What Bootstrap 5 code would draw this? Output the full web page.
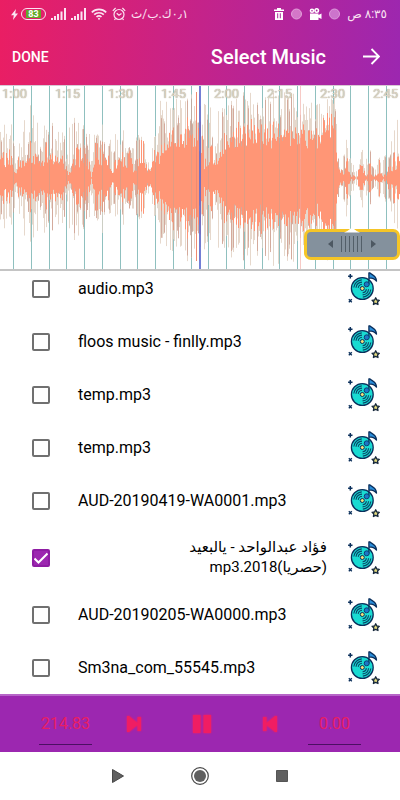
<!DOCTYPE html>
<html lang="en">
<head>
<meta charset="utf-8">
<meta name="viewport" content="width=device-width, initial-scale=1">
<title>Select Music</title>
<link href="https://cdn.jsdelivr.net/npm/bootstrap@5.3.0/dist/css/bootstrap.min.css" rel="stylesheet">
<style>
  body { font-family: Roboto, "DejaVu Sans", sans-serif; color: #000; background: #fff; }
  svg { display: block; flex: none; }
  button { color: inherit; }
  .app-header { background: linear-gradient(95deg, #ea1e63 0%, #c4238a 50%, #9c27b0 100%); color: #fff; }
  .status-line { height: 28px; padding: 0 13px 0 11px; color: #fbe3f2; font: 12px/16px Roboto, "DejaVu Sans", sans-serif; }
  .status-left { gap: 5px; }
  .status-right { gap: 7px; }
  .battery-group { gap: 3px; }
  .battery { width: 25px; height: 12px; border: 1px solid #fbe3f2; border-radius: 6px; padding: 1px 4px; }
  .battery-level { background: #63a82a; color: #fff; font-size: 9px; line-height: 8px; font-weight: 700; }
  .title-line { height: 57px; padding: 0 20px 0 12px; }
  .btn-done { font-size: 14px; font-weight: 500; line-height: 20px; }
  .screen-title { font-size: 20px; font-weight: 500; line-height: 28px; margin-right: 37px; }
  .wave-panel { height: 186px; border-top: 1px solid #d8c8d4; border-bottom: 2px solid #c4c4c4; }
  .wave-panel .wave { width: 100%; height: 100%; }
  .time-scale { color: #ddd5c6; font-size: 13px; line-height: 16px; padding-left: 2px; text-shadow: 0 0 1px #8f8672; }
  .time-scale span { flex: 0 0 53px; }
  .zoom-handle { right: 0; bottom: 9px; width: 96px; height: 31px; background: #84919d; border: 3px solid #f5c527; border-radius: 7px; }
  .zoom-handle svg { overflow: visible; }
  .track-list { min-height: 0; }
  .track { min-height: 53px; padding: 6px 20px 6px 32px; font-size: 16px; line-height: 20px; }
  .track .form-check-input { width: 18px; height: 18px; border: 2px solid #707070; border-radius: 2px; margin: 0 28px 0 0; flex: none; }
  .track .form-check-input:checked { background-color: #9c27b0; border-color: #8e1ca3; background-size: 16px 16px;
    background-image: url("data:image/svg+xml,%3csvg xmlns='http://www.w3.org/2000/svg' viewBox='0 0 16 16'%3e%3cpath d='M1.500 8.500l4 4L14.500 3.500' fill='none' stroke='%23fff' stroke-width='2'/%3e%3c/svg%3e"); }
  .track-name { margin-right: 21px; }
  .track-name[dir="rtl"] { font-size: 15px; padding: 4px 0 5px; max-width: 150px; margin-left: auto; }
  .player { height: 58px; background: #9c27b0; border-top: 2px solid #b765c8; color: #f01d63; }
  .time-field { width: 53px; height: 42px; background: transparent; border: 0; border-bottom: 1px solid #4c0f63; border-radius: 0; color: #e91e63; font: 16px/20px Roboto, sans-serif; text-align: center; padding: 0; }
  .time-field.total { margin-right: 8px; }
  .time-field.current { margin-left: 4px; }
  .player button { width: 68px; }
  .player svg { filter: drop-shadow(0 0 1px #f01d63); }
  .system-nav { height: 48px; }
  .system-nav button { width: 82px; }
</style>
<script src="https://cdn.jsdelivr.net/npm/bootstrap@5.3.0/dist/js/bootstrap.bundle.min.js"></script>
</head>
<body>
<svg width="0" height="0" class="position-absolute" aria-hidden="true">
  <symbol id="disc" viewBox="0 0 32 34">
    <circle cx="14.300" cy="16.500" r="10.900" fill="#19dbd2" stroke="#0b2f5b" stroke-width="1.300"/>
    <g fill="none" stroke="#0b4668" stroke-width="1.100">
      <path d="M5.800 15.500a8.600 8.600 0 0 1 8-7.600M8 15.700a6.400 6.400 0 0 1 6-5.600M10.200 15.900a4.200 4.200 0 0 1 3.800-3.600"/>
      <path d="M22.800 17.500a8.600 8.600 0 0 1-8 7.600M20.600 17.300a6.400 6.400 0 0 1-6 5.600M18.400 17.100a4.200 4.200 0 0 1-3.800 3.600"/>
    </g>
    <circle cx="14.300" cy="16.500" r="2" fill="#f3e27a" stroke="#0b2f5b"/>
    <path d="M20.900 12.500V.8l1 0c1 2 6.200 1.800 6.600 8.200-2-2.600-4-3.200-7.600-3.200" fill="#2a8fdc" stroke="#0b2f5b" stroke-width="1.300" stroke-linejoin="round"/>
    <circle cx="18.700" cy="12.300" r="2.500" fill="#1d78c6" stroke="#0b3f75"/>
    <path d="M2.300 2v4.400M.1 4.200h4.400" stroke="#0b2f5b" stroke-width="1.500"/>
    <path d="M.8 27.200l3 3M3.800 27.200l-3 3" stroke="#0b2f5b" stroke-width="1.300"/>
    <path d="M27.700 25.800l1.100 2.200 2.500.3-1.800 1.700.5 2.500-2.300-1.200-2.300 1.200.5-2.500-1.800-1.700 2.500-.3z" fill="#e6dc80" stroke="#14263a" stroke-width="1.300" stroke-linejoin="round"/>
  </symbol>
  <symbol id="signal" viewBox="0 0 15 12">
    <path d="M0 12v-2h2v2zM3 12V8h2v4zM6 12V6h2v6zM9.500 12V3.500h2V12zM13 12V0h2v12z" fill="currentColor"/>
  </symbol>
</svg>

<div class="vh-100 d-flex flex-column overflow-hidden">
  <header class="app-header flex-shrink-0">
    <div class="status-line d-flex justify-content-between align-items-center">
      <div class="status-left d-flex align-items-center">
        <div class="battery-group d-flex align-items-center">
          <svg width="7" height="11" viewBox="0 0 7 11"><path d="M5 0L0 6.300h2.800L2 11l5-6.600H4.200z" fill="currentColor"/></svg>
          <div class="battery"><div class="battery-level text-center">83</div></div>
        </div>
        <svg width="15" height="12"><use href="#signal"/></svg>
        <svg width="15" height="12"><use href="#signal"/></svg>
        <svg width="16" height="12" viewBox="0 0 16 12" fill="none" stroke="currentColor" stroke-width="1.700"><path d="M.8 4.300a10.300 10.300 0 0 1 14.400 0M3.200 6.700a6.900 6.900 0 0 1 9.600 0M5.500 9a3.600 3.600 0 0 1 5 0"/><circle cx="8" cy="10.700" r="1" fill="currentColor" stroke="none"/></svg>
        <svg width="14" height="14" viewBox="0 0 14 14" fill="none" stroke="currentColor" stroke-width="1.200"><circle cx="7" cy="7.500" r="5"/><path d="M4.700 6.200L7 8.200l2.500-1.700M.8 3.800L3.600 1M13.200 3.800L10.400 1M3.500 11.500l-1 1.500M10.500 11.500l1 1.500"/></svg>
        <span dir="rtl">٠٫١ك.ب/ث</span>
      </div>
      <div class="status-right d-flex align-items-center">
        <svg width="10" height="12" viewBox="0 0 10 12"><path d="M0 1.500h3V0h4v1.500h3V3H0zM1 4h8v8H1z" fill="#fff"/><path d="M3.700 5.300v5M6.300 5.300v5" stroke="#ac2799"/></svg>
        <svg width="11" height="12" viewBox="0 0 11 12"><circle cx="5.500" cy="6" r="5" fill="#d477c8" stroke="#e2a0da"/></svg>
        <svg width="13" height="12" viewBox="0 0 13 12"><g fill="#fff"><circle cx="3" cy="2.700" r="2.300"/><circle cx="7.700" cy="2.500" r="2.500"/><path d="M1 5.500h8.500V7L12.500 5.500v5.500l-3-1.500V12H1z"/></g><circle cx="3" cy="2.700" r=".8" fill="#a9269d"/><circle cx="7.700" cy="2.500" r=".9" fill="#a9269d"/></svg>
        <svg width="11" height="12" viewBox="0 0 11 12"><circle cx="5.500" cy="6" r="5" fill="#cc74cc" stroke="#dd9cdc"/></svg>
        <span dir="rtl">٨:٣٥ ص</span>
      </div>
    </div>
    <div class="title-line d-flex align-items-center">
      <button type="button" class="btn-done border-0 bg-transparent p-0">DONE</button>
      <h1 class="screen-title mb-0 ms-auto">Select Music</h1>
      <button type="button" class="border-0 bg-transparent p-0" aria-label="Back">
        <svg width="17" height="17" viewBox="0 0 17 17" fill="none" stroke="#fff" stroke-width="1.900"><path d="M0 8.500h15.500M8.500 1l7.500 7.500L8.500 16"/></svg>
      </button>
    </div>
  </header>

  <section class="wave-panel position-relative flex-shrink-0 overflow-hidden" aria-label="Waveform">
    <svg class="wave" id="wave" viewBox="0 0 400 183" preserveAspectRatio="none"></svg>
    <div class="time-scale position-absolute top-0 start-0 w-100 d-flex overflow-hidden">
      <span>1:00</span><span>1:15</span><span>1:30</span><span>1:45</span><span>2:00</span><span>2:15</span><span>2:30</span><span>2:45</span>
    </div>
    <button type="button" class="zoom-handle position-absolute p-0 d-flex justify-content-center" aria-label="Zoom">
      <svg width="56" height="25" viewBox="0 0 56 25">
        <path d="M20 .500q4-1.500 8-5 4 3.500 8 5z" fill="#fff"/>
        <path d="M4 12l5-4v8zM52 12l-5-4v8z" fill="#4d5862"/>
        <path d="M17.500 4v16M21.500 4v16M25.500 4v16M29.500 4v16M33.500 4v16M37.500 4v16" stroke="#535f69"/>
      </svg>
    </button>
  </section>

  <main class="track-list flex-grow-1 d-flex flex-column justify-content-end overflow-hidden" id="tracks"></main>

  <footer class="flex-shrink-0">
    <div class="player d-flex justify-content-center align-items-center">
      <input class="time-field total" type="text" value="214.83" aria-label="End time">
      <button type="button" class="border-0 bg-transparent p-0 d-flex justify-content-center" aria-label="Next"><svg width="16" height="16" viewBox="0 0 16 16" fill="currentColor"><path d="M1 0h2l8.500 7V1H15v14h-3.500V9L3 16H1z"/></svg></button>
      <button type="button" class="border-0 bg-transparent p-0 d-flex justify-content-center" aria-label="Pause"><svg width="18" height="18" viewBox="0 0 18 18" fill="currentColor"><path d="M0 0h7.500v18H0zM10.500 0H18v18h-7.500z"/></svg></button>
      <button type="button" class="border-0 bg-transparent p-0 d-flex justify-content-center" aria-label="Previous"><svg width="16" height="16" viewBox="0 0 16 16" fill="currentColor"><path d="M15 0h-2L4.500 7V1H1v14h3.500V9L13 16h2z"/></svg></button>
      <input class="time-field current" type="text" value="0.00" aria-label="Start time">
    </div>
    <nav class="system-nav d-flex justify-content-center align-items-center" aria-label="System">
      <button type="button" class="border-0 bg-transparent p-0 d-flex justify-content-center" aria-label="Back"><svg width="12" height="14" viewBox="0 0 12 14"><path d="M.5.5L11.500 7 .5 13.500z" fill="#606060" stroke="#484848"/></svg></button>
      <button type="button" class="border-0 bg-transparent p-0 d-flex justify-content-center" aria-label="Home"><svg width="18" height="18" viewBox="0 0 18 18"><circle cx="9" cy="9" r="8.300" fill="none" stroke="#484848" stroke-width="1.200"/><circle cx="9" cy="9" r="6" fill="#606060"/></svg></button>
      <button type="button" class="border-0 bg-transparent p-0 d-flex justify-content-center" aria-label="Recent"><svg width="12" height="12" viewBox="0 0 12 12"><path d="M.5.5h11v11H.5z" fill="#606060" stroke="#555"/></svg></button>
    </nav>
  </footer>
</div>

<script>
  // Track rows
  const tracks = [
    { name: 'audio.mp3' },
    { name: 'floos music - finlly.mp3' },
    { name: 'temp.mp3' },
    { name: 'temp.mp3' },
    { name: 'AUD-20190419-WA0001.mp3' },
    { name: 'فؤاد عبدالواحد - يالبعيد (حصريا)2018.mp3', rtl: true, checked: true },
    { name: 'AUD-20190205-WA0000.mp3' },
    { name: 'Sm3na_com_55545.mp3' }
  ];
  document.getElementById('tracks').innerHTML = tracks.map((t, i) =>
    `<div class="track d-flex align-items-center flex-shrink-0">
      <input class="form-check-input" type="checkbox" id="track${i}"${t.checked ? ' checked' : ''}>
      <label class="track-name flex-grow-1" for="track${i}"${t.rtl ? ' dir="rtl"' : ''}>${t.name}</label>
      <svg width="32" height="34" aria-hidden="true"><use href="#disc"/></svg>
    </div>`).join('');

  // Waveform: [x, solid core, orange peak, pale peak], interpolated between stops
  const stops = [
    [0, 13, 36, 62], [12, 9, 28, 66], [15, 1, 6, 20], [18, 9, 22, 48], [30, 14, 36, 74], [40, 8, 26, 50],
    [47, 14, 40, 56], [56, 13, 32, 70], [64, 8, 22, 54], [67, 1, 10, 40], [72, 9, 30, 72], [80, 11, 36, 66],
    [89, 6, 24, 46], [91, 0, 10, 34], [94, 13, 42, 66], [108, 11, 30, 50], [112, 2, 8, 30], [118, 13, 38, 58],
    [131, 8, 26, 50], [134, 3, 12, 40], [140, 14, 40, 54], [144, 10, 34, 40], [147, 5, 18, 40], [157, 12, 32, 78],
    [167, 30, 56, 92], [176, 32, 52, 84], [190, 34, 58, 84], [200, 26, 56, 86], [204, 8, 34, 80], [212, 14, 40, 70],
    [215, 5, 26, 60], [222, 24, 48, 76], [233, 30, 56, 78], [245, 36, 62, 90], [256, 30, 50, 82], [270, 34, 58, 90],
    [290, 32, 54, 86], [305, 34, 54, 84], [320, 34, 58, 76], [335, 34, 76, 86], [337, 4, 20, 30], [342, 2, 8, 24],
    [347, 8, 30, 48], [350, 1, 4, 20], [356, 0, 2, 8], [361, 3, 20, 44], [365, 1, 6, 18], [369, 4, 24, 42],
    [374, 0, 3, 12], [379, 4, 18, 30], [383, 1, 6, 24], [387, 3, 14, 40], [391, 6, 28, 50], [400, 10, 34, 72]
  ];
  let seed = 42;
  const rnd = () => (seed = (seed * 16807) % 2147483647) / 2147483647;
  const level = (x, k) => {
    const i = Math.max(1, stops.findIndex(s => s[0] >= x));
    const a = stops[i - 1], b = stops[i];
    return a[k] + (b[k] - a[k]) * (x - a[0]) / (b[0] - a[0]);
  };
  const mid = 92;
  let pale = '', orange = '', fine = '';
  for (let x = 0; x < 400; x++) {
    const core = level(x, 1) * (0.85 + 0.35 * rnd());
    const o = core + (level(x, 2) - level(x, 1)) * Math.pow(rnd(), 1.7);
    const p = o + Math.max(0, level(x, 3) - o) * Math.pow(rnd(), 1.5);
    pale += `M${x + 0.5} ${mid - p}V${mid + p * (0.85 + 0.2 * rnd())}`;
    orange += `M${x + 0.5} ${mid - o}V${mid + o * (0.85 + 0.2 * rnd())}`;
    if (rnd() > 0.78) { const f = o + (p - o) * 0.9; fine += `M${x + 0.5} ${mid - f}V${mid + f}`; }
  }
  let grid = '';
  for (let x = 13.5; x < 400; x += 17.75) grid += `M${Math.floor(x) + 0.5} 0V183`;
  document.getElementById('wave').innerHTML =
    `<path d="${grid}" stroke="#94c6c6"/>
     <path d="${pale}" stroke="#e6d8cc"/>
     <path d="${fine}" stroke="#cf9f90" stroke-opacity=".8"/>
     <path d="${orange}" stroke="#ff9676"/>
     <path d="${grid}" stroke="#7fb0ad" stroke-opacity=".25"/>
     <path d="M196.500 6V175" stroke="#f08a70"/><path d="M300.500 0V183" stroke="#f2a7a0" stroke-opacity=".6"/>
     <path d="M200 0V183" stroke="#5a68cf" stroke-width="2" stroke-opacity=".85"/>`;
</script>
</body>
</html>
